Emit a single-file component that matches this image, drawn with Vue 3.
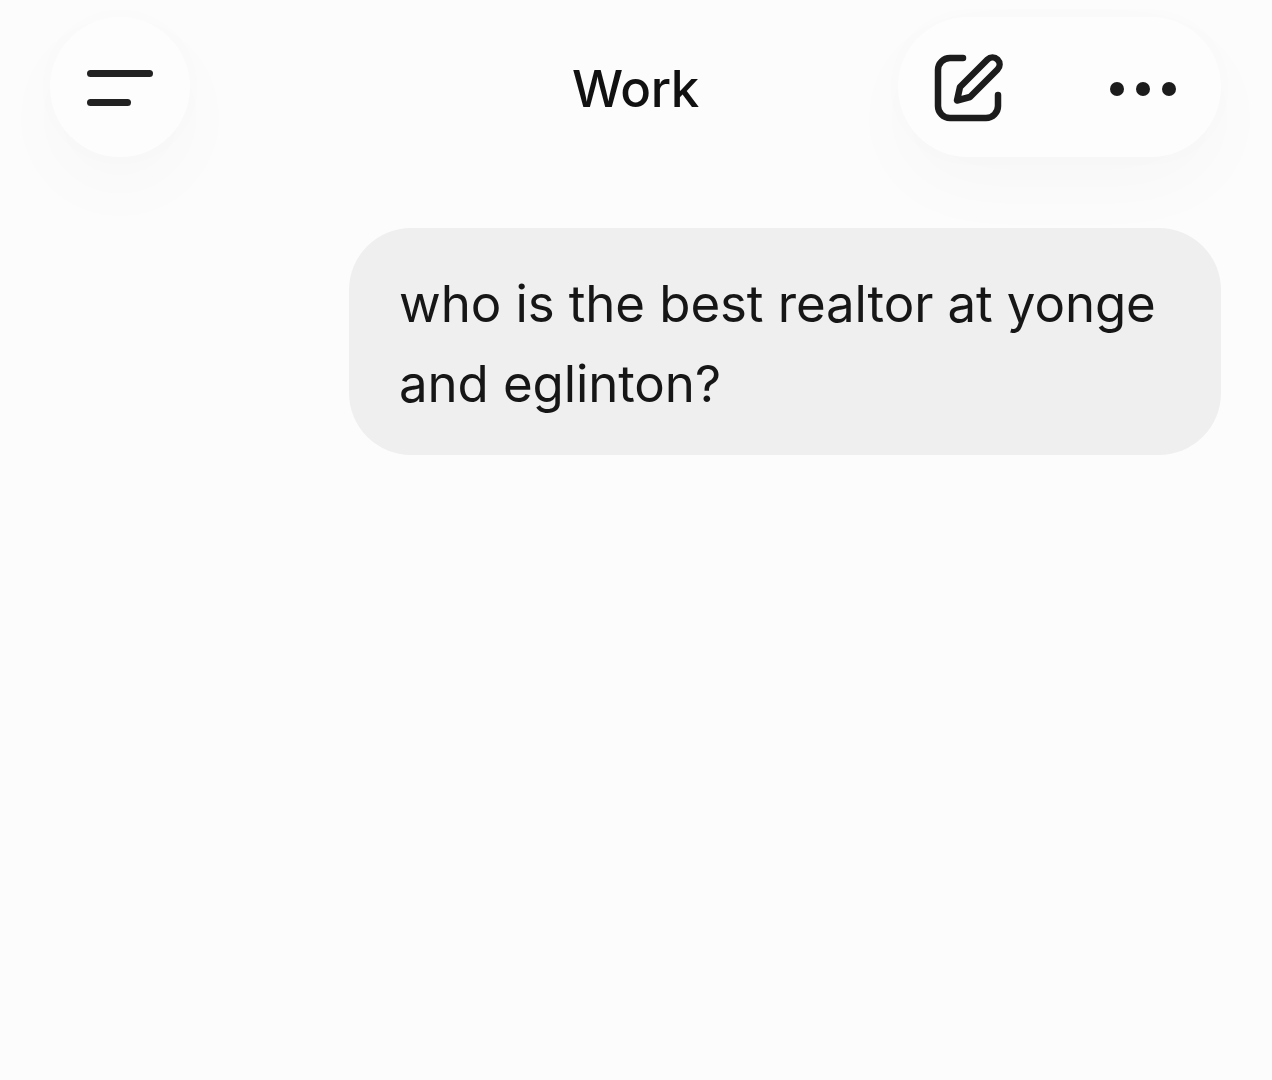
<script setup>
const message = "who is the best realtor at yonge and eglinton?";
</script>

<template>
  <div class="page">
    <header class="topbar">
      <div class="left">
        <button class="round-btn">
          <svg class="menu" width="66" height="36" viewBox="0 0 66 36" fill="none" stroke="#222" stroke-width="7" stroke-linecap="round">
            <path d="M3.5 3.5H62.5" />
            <path d="M3.5 32.5H40.5" />
          </svg>
        </button>
      </div>
      <h1 class="title">Work</h1>
      <div class="right">
        <div class="pill">
          <svg class="compose" width="70" height="70" viewBox="0 0 70 70" fill="none" stroke="#1c1c1c" stroke-width="6.5" stroke-linecap="round" stroke-linejoin="round">
            <path d="M29 4H16A12 12 0 0 0 4 16V52A12 12 0 0 0 16 64H52A12 12 0 0 0 64 52V41" />
            <path d="M23 46.5L26 33L53.5 5.5A7 7 0 0 1 63.5 15.5L36 43Z" />
          </svg>
          <svg class="dots" width="68" height="16" viewBox="0 0 68 16" fill="#1c1c1c">
            <circle cx="8" cy="8" r="7" />
            <circle cx="34" cy="8" r="7" />
            <circle cx="60" cy="8" r="7" />
          </svg>
        </div>
      </div>
    </header>

    <main class="chat">
      <div class="bubble">{{ message }}</div>
    </main>
  </div>
</template>

<style scoped>
.page {
  min-height: 1080px;
  background: #fcfcfc;
  font-family: Inter, "Liberation Sans", sans-serif;
  color: #1a1a1a;
  overflow: hidden;
}

.topbar {
  display: grid;
  grid-template-columns: 1fr auto 1fr;
  align-items: center;
  padding: 17px 51px 0 50px;
}

.left {
  display: flex;
}

.right {
  display: flex;
  justify-content: flex-end;
}

.round-btn {
  width: 140px;
  height: 140px;
  border: none;
  border-radius: 50%;
  padding: 2px 0 0;
  background: #fdfdfd;
  box-shadow: 0 30px 80px rgba(0, 0, 0, 0.025), 0 0 24px rgba(0, 0, 0, 0.015);
  display: flex;
  align-items: center;
  justify-content: center;
}

.title {
  margin: 2px 0 0;
  font-size: 51px;
  font-weight: 500;
  letter-spacing: -0.4px;
  color: #111;
}

.pill {
  width: 323px;
  height: 140px;
  box-sizing: border-box;
  padding: 3px 44px 0 36px;
  border-radius: 70px;
  background: #fdfdfd;
  box-shadow: 0 30px 80px rgba(0, 0, 0, 0.025), 0 0 24px rgba(0, 0, 0, 0.015);
  display: flex;
  align-items: center;
  justify-content: space-between;
}

.chat {
  display: flex;
  justify-content: flex-end;
  padding: 71px 51px 0 0;
}

.bubble {
  width: 872px;
  height: 227px;
  box-sizing: border-box;
  padding: 36px 40px 0 50px;
  border-radius: 62px;
  background: #efefef;
  font-size: 51px;
  letter-spacing: -0.1px;
  line-height: 80px;
  color: #161616;
}
</style>
